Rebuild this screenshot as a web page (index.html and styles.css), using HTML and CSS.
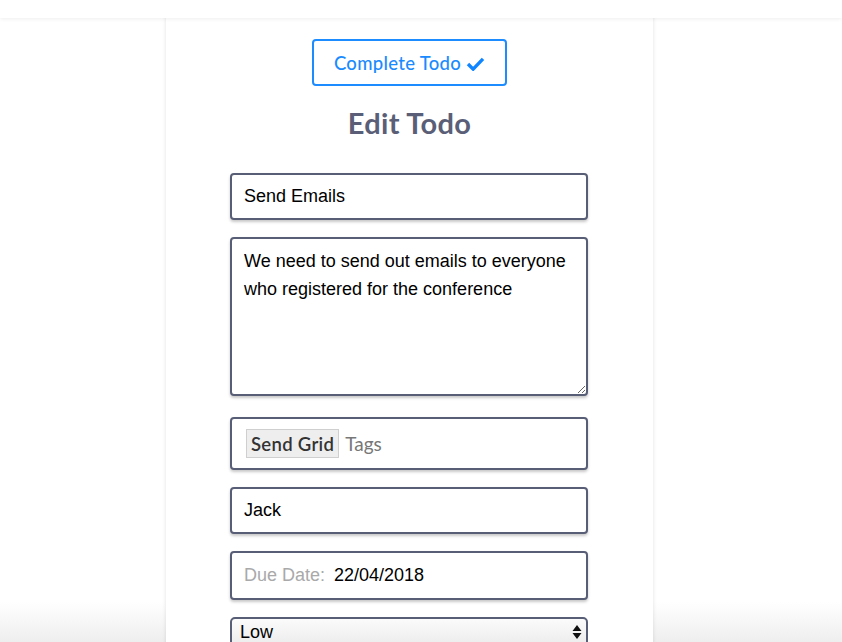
FILE: index.html
```html
<!DOCTYPE html>
<html>
<head>
<meta charset="utf-8">
<link rel="stylesheet" href="styles.css">
</head>
<body>
<header class="topbar"></header>
<div class="bottom-fade"></div>
<main class="card">
  <button class="complete-btn">Complete Todo <svg class="check" viewBox="0 0 20 16" width="19" height="15"><path d="M2 8.5 L7.5 14 L18 3" fill="none" stroke="#0f86ff" stroke-width="3.6" stroke-linecap="butt" stroke-linejoin="miter"/></svg></button>
  <h1 class="title">Edit Todo</h1>
  <form class="form">
    <input class="field" type="text" value="Send Emails">
    <textarea class="field area">We need to send out emails to everyone who registered for the conference</textarea>
    <div class="field tags">
      <span class="chip">Send Grid</span>
      <span class="tags-ph">Tags</span>
    </div>
    <input class="field" type="text" value="Jack">
    <div class="field date">
      <span class="date-label">Due Date:</span>
      <span class="date-value">22/04/2018</span>
    </div>
    <div class="select">
      <span>Low</span>
      <svg class="arrows" viewBox="0 0 10 16" width="10" height="16"><path d="M5 1 L9.5 7 H0.5 Z M5 15 L9.5 9 H0.5 Z" fill="#111"/></svg>
    </div>
  </form>
</main>
</body>
</html>
```
FILE: styles.css
```css
html, body {
  margin: 0;
  padding: 0;
  background: #fff;
  height: 100%;
  overflow: hidden;
}
body {
  font-family: "Liberation Sans", Arial, sans-serif;
  position: relative;
}
.topbar {
  position: absolute;
  top: 0;
  left: 0;
  right: 0;
  height: 18px;
  background: #fff;
  box-shadow: 0 1px 4px rgba(0,0,0,0.07);
  z-index: 2;
}
.bottom-fade {
  position: absolute;
  left: 0;
  right: 0;
  bottom: 0;
  height: 40px;
  background: linear-gradient(rgba(240,240,240,0), #eeeeee);
  z-index: 0;
}
.card {
  position: relative;
  z-index: 1;
  background: #fff;
  margin-left: 166px;
  width: 487px;
  height: 700px;
  box-shadow: 0 0 4px rgba(0,0,0,0.12);
  padding-top: 39px;
  box-sizing: border-box;
  display: flex;
  flex-direction: column;
  align-items: center;
}
.complete-btn {
  width: 195px;
  height: 47px;
  border: 2px solid #1c8cff;
  border-radius: 4px;
  background: #fff;
  color: #1a8aff;
  font-family: "Lato", sans-serif;
  font-size: 18.5px;
  letter-spacing: 0.3px;
  font-weight: 500;
  display: flex;
  align-items: center;
  justify-content: center;
  gap: 5px;
  padding: 0;
  padding-top: 1px;
}
.check { display: block; }
.title {
  margin: 20px 0 0 0;
  height: 67px;
  line-height: 34px;
  font-family: "Lato", sans-serif;
  font-weight: 700;
  font-size: 29px;
  letter-spacing: 0.3px;
  color: #5a5f77;
}
.form {
  width: 358px;
  display: flex;
  flex-direction: column;
  gap: 17px;
  margin-left: -1px;
}
.field {
  box-sizing: border-box;
  width: 358px;
  height: 47px;
  border: 2px solid #585e76;
  border-radius: 4px;
  box-shadow: 0 2px 3px rgba(0,0,0,0.22);
  background: #fff;
  font-family: "Liberation Sans", Arial, sans-serif;
  font-size: 18px;
  color: #000;
  padding: 0 12px;
  margin: 0;
  outline: none;
}
.area {
  display: block;
  height: 159px;
  padding: 8px 12px;
  line-height: 28px;
  resize: vertical;
  margin-bottom: 4px;
}
.tags {
  height: 53px;
  display: flex;
  align-items: center;
  padding-left: 14px;
  gap: 6px;
}
.chip {
  height: 29px;
  box-sizing: border-box;
  padding: 0 4px;
  background: #eeeeee;
  border: 1px solid #cfcfcf;
  font-family: "Lato", sans-serif;
  font-weight: 600;
  font-size: 18.5px;
  letter-spacing: 0.3px;
  color: #333;
  display: flex;
  align-items: center;
}
.tags-ph {
  font-family: "Lato", sans-serif;
  font-size: 19px;
  color: #777;
}
.date {
  height: 49px;
  display: flex;
  align-items: center;
  gap: 9px;
}
.date-label { color: #a9a9a9; }
.date-value { color: #000; }
.select {
  box-sizing: border-box;
  width: 358px;
  height: 30px;
  border: 2px solid #585e76;
  border-radius: 5px;
  background: linear-gradient(#fbfbfb, #ececec);
  display: flex;
  align-items: center;
  justify-content: space-between;
  padding: 0 4px 0 8px;
  font-size: 18px;
  color: #000;
}
.arrows { display: block; }
```
